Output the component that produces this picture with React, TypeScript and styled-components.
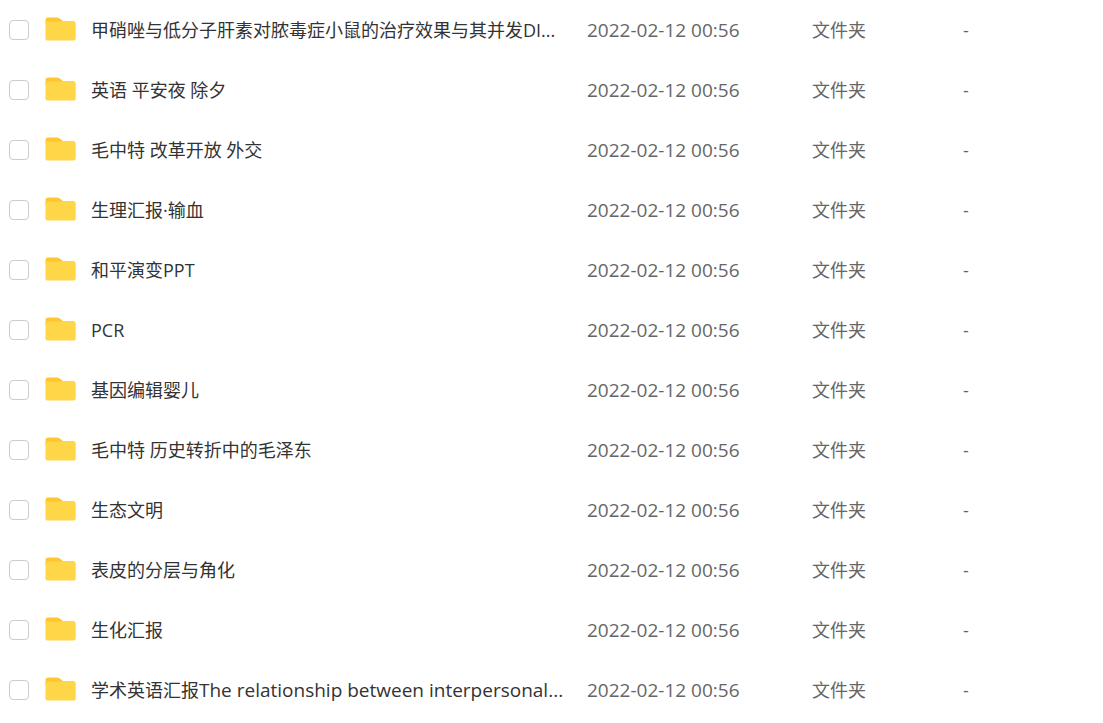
import React from "react";
import styled, { createGlobalStyle } from "styled-components";

const GlobalStyle = createGlobalStyle`
  body {
    margin: 0;
    background: #fff;
    font-family: "Open Sans", "Noto Sans CJK SC", sans-serif;
    font-size: 18px;
    line-height: 24px;
  }
`;

const FileTable = styled.table`
  width: 100%;
  table-layout: fixed;
  border-collapse: collapse;
`;

const Column = styled.col<{ $width?: number }>`
  width: ${({ $width }) => ($width ? `${$width}px` : "auto")};
`;

const FileRow = styled.tr`
  height: 60px;
`;

const Cell = styled.td`
  padding: 0;
  vertical-align: middle;
  white-space: nowrap;
  color: #666;
`;

const SelectCell = styled(Cell)`
  padding-left: 9px;
`;

const DateCell = styled(Cell)`
  font-size: 19px;
`;

const NameCell = styled(Cell)`
  overflow: hidden;
  text-overflow: ellipsis;
  color: #333;
`;

const Checkbox = styled.input`
  appearance: none;
  display: block;
  box-sizing: border-box;
  width: 20px;
  height: 20px;
  margin: 0;
  border: 1px solid #ccc;
  border-radius: 4px;
  background: #fff;

  &:checked {
    border-color: #06a7ff;
    background: #06a7ff;
  }
`;

const FolderSvg = styled.svg`
  display: block;
  margin-bottom: 2px;
`;

const NameLabel = styled.label`
  cursor: pointer;
`;

const LatinTitle = styled.span`
  font-size: 19px;
`;

const Folder = () => (
  <FolderSvg width="31" height="24" viewBox="0 0 31 24" aria-hidden="true">
    <path
      d="M0.5 3.2C0.5 1.4 1.5 .4 3.3 .4H11.4C12.8 .4 13.8 .8 14.8 1.6L18.2 4.3V8H.5Z"
      fill="#ffc72c"
    />
    <path
      d="M.5 6.2C.5 5.1 1.1 4.5 2.2 4.5H15.5C16.4 4.5 17 4 18 4H28C29.8 4 30.7 4.9 30.7 6.7V20.9C30.7 22.8 29.8 23.6 28 23.6H3.2C1.4 23.6 .5 22.8 .5 20.9Z"
      fill="#ffd648"
    />
  </FolderSvg>
);

type FileName = { text: string; latin?: string };

const files: FileName[] = [
  { text: "甲硝唑与低分子肝素对脓毒症小鼠的治疗效果与其并发DI..." },
  { text: "英语 平安夜 除夕" },
  { text: "毛中特 改革开放 外交" },
  { text: "生理汇报·输血" },
  { text: "和平演变PPT" },
  { text: "PCR" },
  { text: "基因编辑婴儿" },
  { text: "毛中特 历史转折中的毛泽东" },
  { text: "生态文明" },
  { text: "表皮的分层与角化" },
  { text: "生化汇报" },
  { text: "学术英语汇报", latin: "The relationship between interpersonal..." },
];

export default function App() {
  return (
    <main lang="zh-CN">
      <GlobalStyle />
      <FileTable>
        <colgroup>
          <Column $width={45} />
          <Column $width={46} />
          <Column />
          <Column $width={225} />
          <Column $width={151} />
          <Column $width={140} />
        </colgroup>
        <tbody>
          {files.map(({ text, latin }, i) => (
            <FileRow key={text}>
              <SelectCell>
                <Checkbox type="checkbox" id={`file-${i}`} />
              </SelectCell>
              <Cell>
                <Folder />
              </Cell>
              <NameCell>
                <NameLabel htmlFor={`file-${i}`}>
                  {text}
                  {latin && <LatinTitle>{latin}</LatinTitle>}
                </NameLabel>
              </NameCell>
              <DateCell>2022-02-12 00:56</DateCell>
              <Cell>文件夹</Cell>
              <Cell>-</Cell>
            </FileRow>
          ))}
        </tbody>
      </FileTable>
    </main>
  );
}
